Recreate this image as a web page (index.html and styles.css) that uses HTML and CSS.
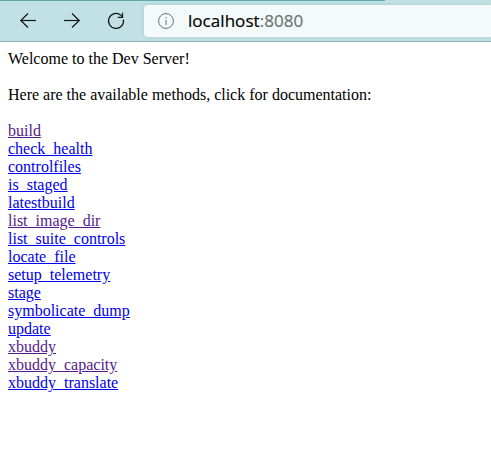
FILE: index.html
```html
<!DOCTYPE html>
<html lang="en">
<head>
<meta charset="utf-8">
<title>Dev Server</title>
<link rel="stylesheet" href="styles.css">
</head>
<body>
<div class="tab-edge"></div>
<header class="toolbar">
<svg class="icon" viewBox="0 0 20 20"><path d="M18 10.5H2.8"/><path d="M10 3.5L2.8 10.5L10 17.5"/></svg>
<svg class="icon" viewBox="0 0 20 20"><path d="M2 10.5H17.2"/><path d="M10 3.5L17.2 10.5L10 17.5"/></svg>
<svg class="icon" viewBox="0 0 20 20"><path d="M17.4 9.5A7.5 7.5 0 1 1 14.8 5.1L16.5 6.7"/><path d="M16.5 2.8V7.4H11.8"/></svg>
<div class="address">
<svg class="info" viewBox="0 0 16 16"><circle cx="8" cy="8" r="7.4"/><path d="M8 7V12M8 4V5.5"/></svg>
<span class="url">localhost<span class="port">:8080</span></span>
</div>
</header>
<main class="page">
<p>Welcome to the Dev Server!</p>
<p>Here are the available methods, click for documentation:</p>
<nav class="methods">
<a class="visited" href="#">build</a>
<a href="#">check_health</a>
<a href="#">controlfiles</a>
<a href="#">is_staged</a>
<a href="#">latestbuild</a>
<a class="visited" href="#">list_image_dir</a>
<a href="#">list_suite_controls</a>
<a href="#">locate_file</a>
<a href="#">setup_telemetry</a>
<a href="#">stage</a>
<a href="#">symbolicate_dump</a>
<a href="#">update</a>
<a class="visited" href="#">xbuddy</a>
<a class="visited" href="#">xbuddy_capacity</a>
<a href="#">xbuddy_translate</a>
</nav>
</main>
</body>
</html>
```
FILE: styles.css
```css
body { margin: 0; background: #c2e1e4; overflow: hidden; }
.tab-edge { width: 385px; height: 1px; background: #62a9ae; }
.toolbar { box-sizing: border-box; height: 41px; display: flex; align-items: center; padding-left: 18px; gap: 24px; background: #c2e1e4; border-bottom: 1px solid #8bb0b4; }
.icon { width: 20px; height: 20px; flex: none; margin-top: -2px; fill: none; stroke: #101414; stroke-width: 1.2; }
.address { flex: 1; height: 32px; margin-left: -6px; display: flex; align-items: center; background: #f3faf9; border-radius: 4px 0 0 4px; padding-left: 14px; gap: 14px; box-shadow: 0 0 4px rgba(60, 120, 125, 0.2); }
.info { width: 16px; height: 16px; fill: none; stroke: #6b7273; }
.url { margin-top: -2px; font: 17px "Open Sans", sans-serif; letter-spacing: 0.05px; color: #000; -webkit-text-stroke: 0.2px #000; }
.port { color: #6b7273; -webkit-text-stroke-color: #6b7273; }
.page { min-height: 394px; padding: 8px; font: 16px/18px "Liberation Serif", serif; color: #000; background: #fff; }
.page p { margin: 0 0 18px; }
.methods { display: flex; flex-direction: column; align-items: flex-start; }
.methods a { color: #0000ee; text-decoration: underline; }
.methods .visited { color: #551a8b; }
```
